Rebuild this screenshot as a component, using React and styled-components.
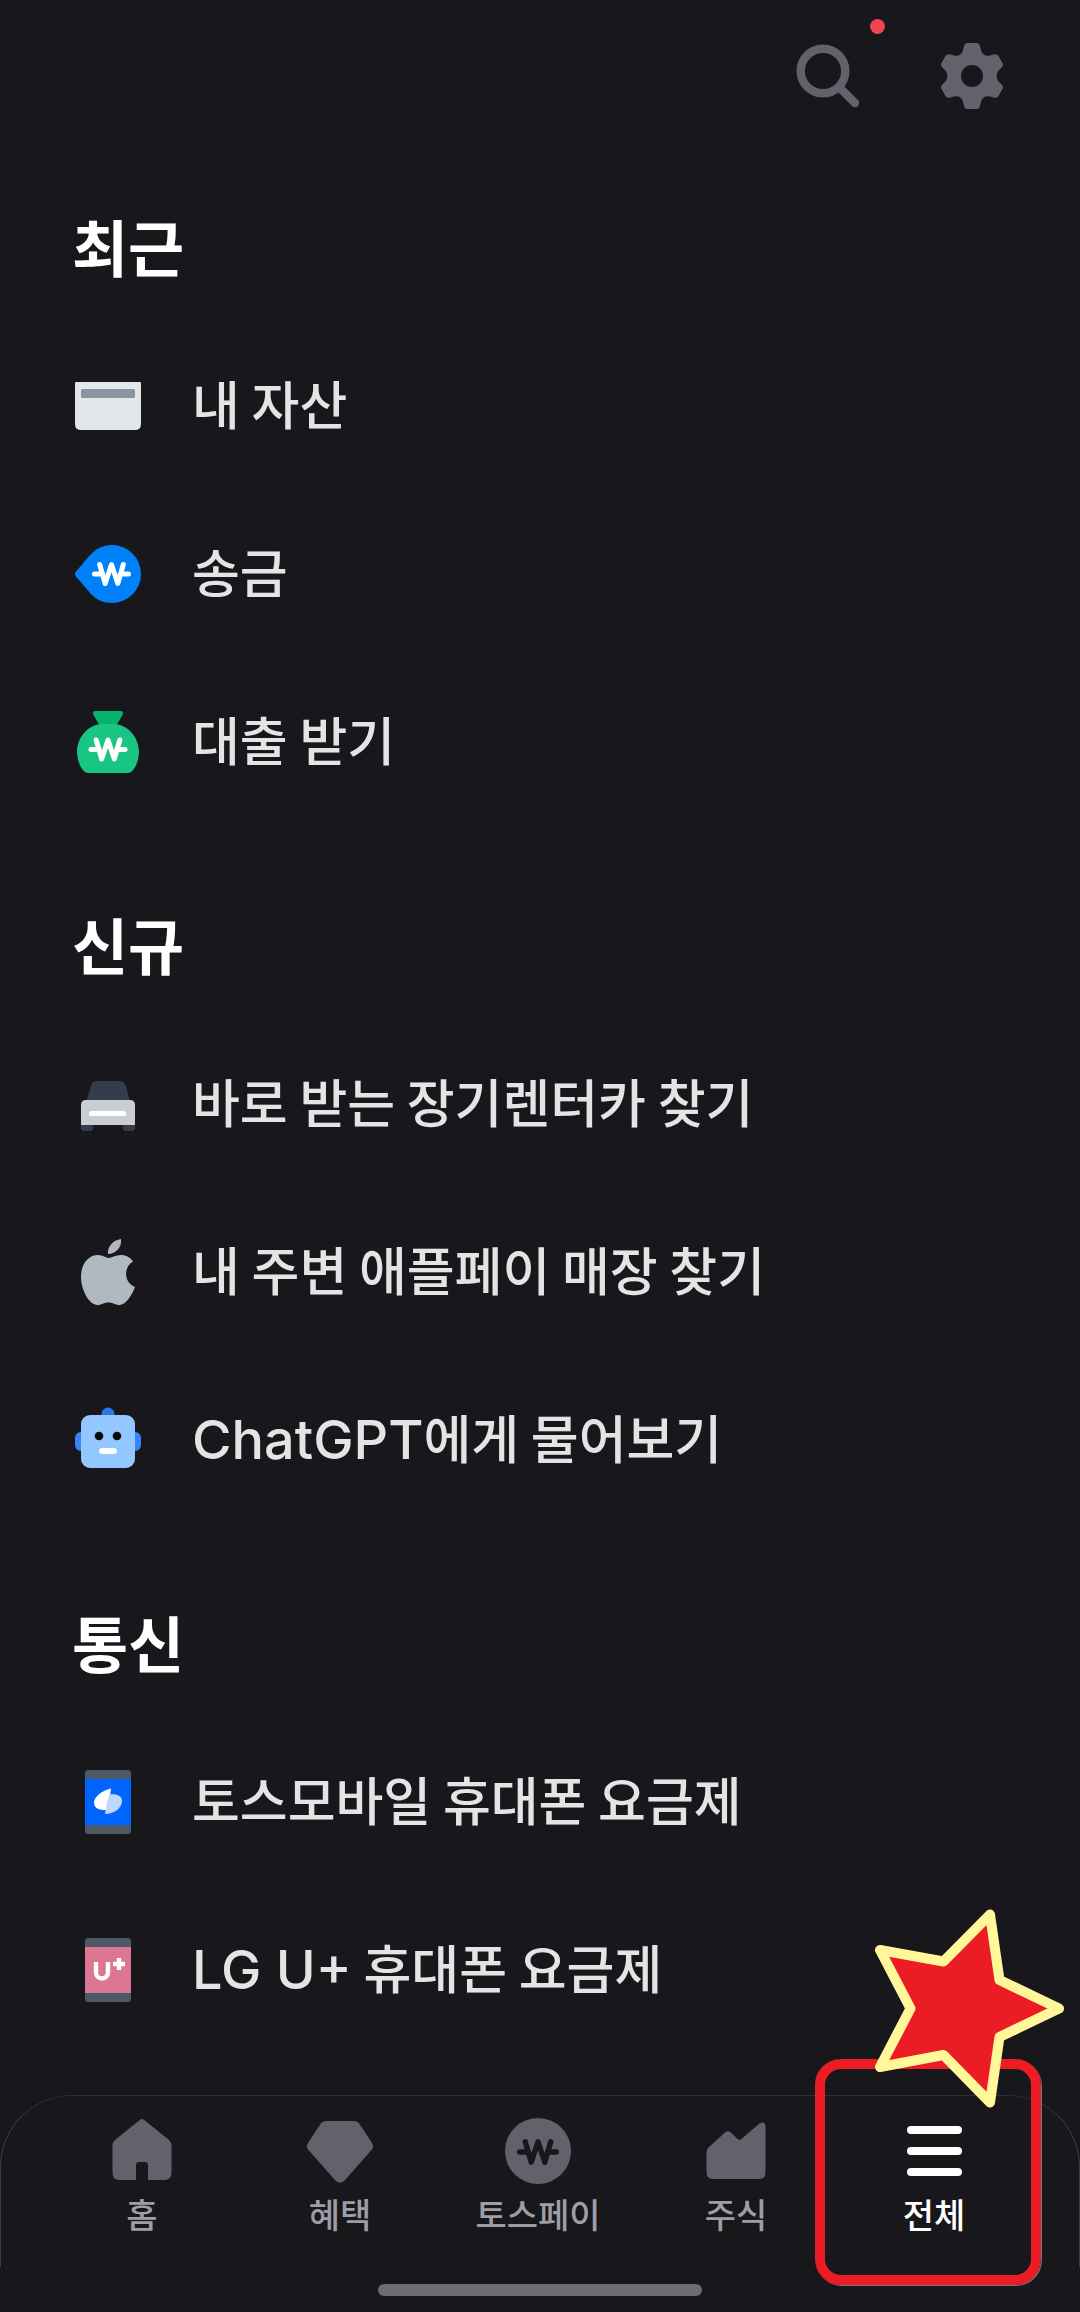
import React, { useState } from "react";
import styled, { createGlobalStyle } from "styled-components";

const colors = {
  background: "#17171c",
  title: "#ffffff",
  text: "#e4e4e5",
  label: "#9e9ea4",
  icon: "#62626d",
  line: "#2e2e35",
  lineSide: "#3c3c45",
  red: "#ec1c24",
};

// ---------------- styled components ----------------
const GlobalStyle = createGlobalStyle`
  * {
    box-sizing: border-box;
  }
  body {
    margin: 0;
    background: ${colors.background};
    font-family: "Noto Sans CJK KR", sans-serif;
  }
`;
const Page = styled.div`
  display: flex;
  flex-direction: column;
  min-height: 100vh;
  color: ${colors.text};
`;
const Header = styled.header`
  display: flex;
  justify-content: flex-end;
  gap: 72px;
  padding: 40px 72px 66px;
`;
const IconButton = styled.button`
  position: relative;
  width: 72px;
  height: 72px;
  padding: 0;
  border: 0;
  background: none;
  color: ${colors.icon};
  cursor: pointer;
`;
const Dot = styled.span`
  position: absolute;
  top: -21px;
  right: -21px;
  width: 15px;
  height: 15px;
  border-radius: 50%;
  background: #f04452;
`;
const Main = styled.main`
  display: flex;
  flex-direction: column;
  flex: 1;
  gap: 50px;
`;
const SectionTitle = styled.h2`
  margin: 0;
  padding: 0 72px 8px;
  font-size: 61px;
  font-weight: 700;
  line-height: 136px;
  color: ${colors.title};
`;
const List = styled.ul`
  margin: 0;
  padding: 0;
  list-style: none;
`;
const ItemLink = styled.a`
  display: flex;
  align-items: center;
  gap: 48px;
  height: 168px;
  padding: 0 72px;
  color: inherit;
  text-decoration: none;
`;
const ItemName = styled.span`
  padding-bottom: 6px;
  font-size: 52px;
  font-weight: 500;
  line-height: 72px;
`;
const Latin = styled.span`
  font-family: Inter, sans-serif;
  font-size: 54px;
  line-height: 1;
`;
const Svg = styled.svg`
  display: block;
  flex: none;
  width: 72px;
  height: 72px;
  overflow: visible;
`;
const BottomBar = styled.div`
  position: sticky;
  bottom: 0;
  background: ${colors.background};
`;
const TabNav = styled.nav`
  display: flex;
  height: 172px;
  padding: 19px 46px 0 42px;
  border: 1px solid ${colors.lineSide};
  border-top-color: ${colors.line};
  border-bottom: 0;
  border-radius: 72px 72px 0 0;
`;
const TabLink = styled.a`
  position: relative;
  display: flex;
  flex: 1;
  flex-direction: column;
  align-items: center;
  font-size: 34px;
  font-weight: 500;
  line-height: 54px;
  color: ${(props) => (props.$active ? colors.title : colors.label)};
  text-decoration: none;
  ${Svg} {
    color: ${(props) => (props.$active ? colors.title : colors.icon)};
  }
`;
const Marker = styled.span`
  position: absolute;
  top: -56px;
  left: -20px;
  width: 226px;
  height: 226px;
  border: 10px solid ${colors.red};
  border-radius: 26px;
  box-shadow: 1px 1px 0 #77777a;
  pointer-events: none;
`;
const Star = styled.svg`
  position: absolute;
  top: -206px;
  left: 40px;
  width: 190px;
  height: 200px;
  pointer-events: none;
`;
const HomeIndicator = styled.div`
  width: 30%;
  height: 12px;
  margin: 17px auto 16px;
  border-radius: 6px;
  background: #6d6d6f;
`;

// ---------------- icons ----------------
const Icon = ({ children }) => (
  <Svg viewBox="0 0 72 72" fill="none" aria-hidden="true">
    {children}
  </Svg>
);

// won sign centred on 0,0
const Won = ({ x, y, color, scale = 1 }) => (
  <g
    transform={`translate(${x} ${y}) scale(${scale})`}
    stroke={color}
    strokeWidth="5"
    strokeLinecap="round"
    strokeLinejoin="round"
  >
    <path d="M-11.8 -9.5 L-6.3 9.5 L0 -9.5 L6.3 9.5 L11.8 -9.5" />
    <path d="M-17 0 H-9 M9 0 H17" />
  </g>
);

const SearchIcon = () => (
  <Icon>
    <circle cx="31" cy="31" r="22.3" stroke="currentColor" strokeWidth="8.4" />
    <path d="M48 48 L63 63" stroke="currentColor" strokeWidth="8.4" strokeLinecap="round" />
  </Icon>
);

const GearIcon = () => (
  <Icon>
    <path
      fill="currentColor"
      fillRule="evenodd"
      d="M31.5 3 H40.5 Q43 3 43.8 5.6 L45.2 10.8 Q47.4 17 53.6 15.6 L58.6 14.3 Q61 13.8 62.4 15.8 L66.7 23.3 Q67.6 25.3 66 27.2 L62.6 30.6 Q58.6 36 62.6 41.4 L66 44.8 Q67.6 46.7 66.7 48.7 L62.4 56.2 Q61 58.2 58.6 57.7 L53.6 56.4 Q47.4 55 45.2 61.2 L43.8 66.4 Q43 69 40.5 69 H31.5 Q29 69 28.2 66.4 L26.8 61.2 Q24.6 55 18.4 56.4 L13.4 57.7 Q11 58.2 9.6 56.2 L5.3 48.7 Q4.4 46.7 6 44.8 L9.4 41.4 Q13.4 36 9.4 30.6 L6 27.2 Q4.4 25.3 5.3 23.3 L9.6 15.8 Q11 13.8 13.4 14.3 L18.4 15.6 Q24.6 17 26.8 10.8 L28.2 5.6 Q29 3 31.5 3 Z M36 25 A11 11 0 1 0 36 47 A11 11 0 1 0 36 25 Z"
    />
  </Icon>
);

const CardIcon = () => (
  <Icon>
    <path fill="#e3e7ea" d="M4 12 H68 Q69 12 69 13 V54 Q69 60 63 60 H9 Q3 60 3 54 V13 Q3 12 4 12 Z" />
    <rect x="9" y="19" width="54" height="9" rx="1" fill="#8b95a1" />
  </Icon>
);

const SendIcon = () => (
  <Icon>
    <path fill="#0081fa" d="M4 33.5 L18.5 16.5 Q27 7 40 7 A29 29 0 0 1 40 65 Q27 65 18.5 55.5 L4 38.5 Q2 36 4 33.5 Z" />
    <Won x={39.5} y={36} color="#fff" />
  </Icon>
);

const LoanIcon = () => (
  <Icon>
    <path fill="#05b26c" d="M23 5 H49 Q52 5.6 50.5 9 L44 20 H28 L21.5 9 Q20 5.6 23 5 Z" />
    <path fill="#18c583" d="M28 18 H44 C57 20 67 32 67 46 Q67 56 61.5 63.5 Q59 67 55 67 H17 Q13 67 10.5 63.5 Q5 56 5 46 C5 32 15 20 28 18 Z" />
    <Won x={36} y={43.5} color="#fff" />
  </Icon>
);

const CarIcon = () => (
  <Icon>
    <path fill="#333d4b" d="M25 13 H47 Q52 13 54 18 L58 34 H14 L19 18 Q20.5 13 25 13 Z" />
    <path fill="#333d4b" d="M9 55 H21 V60 Q21 63 18 63 H12 Q9 63 9 60 Z M51 55 H63 V60 Q63 63 60 63 H54 Q51 63 51 60 Z" />
    <path fill="#cacdd1" d="M14 32 H58 Q63 32 63 37 V57 H9 V37 Q9 32 14 32 Z" />
    <rect x="17" y="43" width="37" height="5" rx="2.5" fill="#fff" />
  </Icon>
);

const AppleIcon = () => (
  <Icon>
    <path fill="#b0b8c1" d="M49 3 C50 11 44 18 36 18 C35 11 41 4 49 3 Z" />
    <path
      fill="#b0b8c1"
      d="M36.5 22 C40 22 43 19 49 19 C54 19 58.5 21.5 61 25.5 C51 31 52 47 63 51 C60.5 58 54 69 47.5 69 C43 69 41.5 66.5 36.5 66.5 C31.5 66.5 30 69 25.5 69 C17 69 9 53.5 9 41 C9 27 17 19 26 19 C31 19 34 22 36.5 22 Z"
    />
  </Icon>
);

const RobotIcon = () => (
  <Icon>
    <circle cx="36" cy="10" r="6.5" fill="#2d75e8" />
    <rect x="3" y="28" width="20" height="19" rx="6" fill="#3485f6" />
    <rect x="49" y="28" width="20" height="19" rx="6" fill="#3485f6" />
    <rect x="9" y="11" width="54" height="53" rx="9" fill="#92c7ff" />
    <circle cx="27" cy="32" r="4.3" fill="#08090c" />
    <circle cx="45" cy="32" r="4.3" fill="#08090c" />
    <rect x="27" y="44" width="18" height="6" rx="3" fill="#fff" />
  </Icon>
);

const TossMobileIcon = () => (
  <Icon>
    <rect x="13" y="4" width="46" height="64" rx="3" fill="#4e5968" />
    <rect x="13" y="13" width="46" height="46" fill="#0064ff" />
    <path fill="#fff" d="M39 22.5 C29 25 22 31 22 37 C22 42 27.5 44.5 34 44 C37.5 37 38 30 39 22.5 Z" />
    <path fill="#bfd6ff" d="M37.5 28.5 C45 27.5 50 30 50 35 C50 42 42 48 33 48 C34 41 35.5 34 37.5 28.5 Z" />
  </Icon>
);

const UplusIcon = () => (
  <Icon>
    <rect x="13" y="4" width="46" height="64" rx="3" fill="#4e5968" />
    <rect x="13" y="13" width="46" height="46" fill="#dc7693" />
    <path d="M24 28 V38.5 A6 6 0 0 0 36 38.5 V28 M47 24 V36 M41 30 H53" stroke="#fff" strokeWidth="4.4" />
  </Icon>
);

const HomeIcon = () => (
  <Icon>
    <path
      fill="currentColor"
      d="M33.5 5.2 Q36 3 38.5 5.2 L63 25 Q65.5 27.5 65.5 30.5 V58 Q65.5 65 58.5 65 H42 V50 Q42 47 39 47 H33 Q30 47 30 50 V65 H13.5 Q6.5 65 6.5 58 V30.5 Q6.5 27.5 9 25 Z"
    />
  </Icon>
);

const DiamondIcon = () => (
  <Icon>
    <path
      fill="currentColor"
      d="M22.5 6 H49.5 Q53.5 6 55.5 9 L68 28 Q70.5 31.5 67.5 35 L41 65 Q36 70.5 31 65 L4.5 35 Q1.5 31.5 4 28 L16.5 9 Q18.5 6 22.5 6 Z"
    />
  </Icon>
);

const PayIcon = () => (
  <Icon>
    <circle cx="36" cy="36" r="33" fill="currentColor" />
    <Won x={36} y={37} color={colors.background} scale={1.08} />
  </Icon>
);

const StockIcon = () => (
  <Icon>
    <path
      fill="currentColor"
      d="M9 32 L25 17.5 Q28 15 31 17.5 L37 23.5 Q39.5 26 42 23.5 L59.5 8.5 Q65 5.5 65.5 11 V57.5 Q65.5 64 59 64 H13 Q6.5 64 6.5 57.5 V37 Q6.5 34 9 32 Z"
    />
  </Icon>
);

const MenuIcon = () => (
  <Icon>
    <path d="M13 15 H60 M13 36 H60 M13 57 H60" stroke="currentColor" strokeWidth="8" strokeLinecap="round" />
  </Icon>
);

// ---------------- data ----------------
const sections = [
  {
    title: "최근",
    items: [
      { id: "assets", name: "내 자산", icon: CardIcon },
      { id: "send", name: "송금", icon: SendIcon },
      { id: "loan", name: "대출 받기", icon: LoanIcon },
    ],
  },
  {
    title: "신규",
    items: [
      { id: "rental", name: "바로 받는 장기렌터카 찾기", icon: CarIcon },
      { id: "applepay", name: "내 주변 애플페이 매장 찾기", icon: AppleIcon },
      { id: "chatgpt", latin: "ChatGPT", name: "에게 물어보기", icon: RobotIcon },
    ],
  },
  {
    title: "통신",
    items: [
      { id: "tossmobile", name: "토스모바일 휴대폰 요금제", icon: TossMobileIcon },
      { id: "uplus", latin: "LG U+", name: " 휴대폰 요금제", icon: UplusIcon },
    ],
  },
];

const tabs = [
  { id: "home", name: "홈", icon: HomeIcon },
  { id: "benefit", name: "혜택", icon: DiamondIcon },
  { id: "pay", name: "토스페이", icon: PayIcon },
  { id: "stock", name: "주식", icon: StockIcon },
  { id: "all", name: "전체", icon: MenuIcon, marked: true },
];

// ---------------- component ----------------
const App = () => {
  const [activeTab, setActiveTab] = useState("all");

  return (
    <Page>
      <GlobalStyle />
      <Header>
        <IconButton type="button" aria-label="검색">
          <SearchIcon />
          <Dot />
        </IconButton>
        <IconButton type="button" aria-label="설정">
          <GearIcon />
        </IconButton>
      </Header>

      <Main>
        {sections.map((section) => (
          <section key={section.title}>
            <SectionTitle>{section.title}</SectionTitle>
            <List>
              {section.items.map(({ id, name, icon: ItemIcon, latin }) => (
                <li key={id}>
                  <ItemLink href={`#${id}`}>
                    <ItemIcon />
                    <ItemName>
                      {latin && <Latin>{latin}</Latin>}
                      {name}
                    </ItemName>
                  </ItemLink>
                </li>
              ))}
            </List>
          </section>
        ))}
      </Main>

      <BottomBar>
        <TabNav>
          {tabs.map(({ id, name, icon: TabIcon, marked }) => (
            <TabLink
              key={id}
              href={`#${id}`}
              $active={activeTab === id}
              onClick={() => setActiveTab(id)}
            >
              <TabIcon />
              {name}
              {marked && (
                <>
                  <Marker />
                  <Star viewBox="0 0 190 200" aria-hidden="true">
                    <path
                      d="M184 99.5 L124.5 128 L115 193.5 L68.5 146 L5 158 L35.5 99.5 L5 41 L68.5 52.5 L115 5.5 L124.5 71 Z"
                      fill={colors.red}
                      stroke="#fff799"
                      strokeWidth="10"
                      strokeLinejoin="round"
                    />
                  </Star>
                </>
              )}
            </TabLink>
          ))}
        </TabNav>
        <HomeIndicator />
      </BottomBar>
    </Page>
  );
};

export default App;
